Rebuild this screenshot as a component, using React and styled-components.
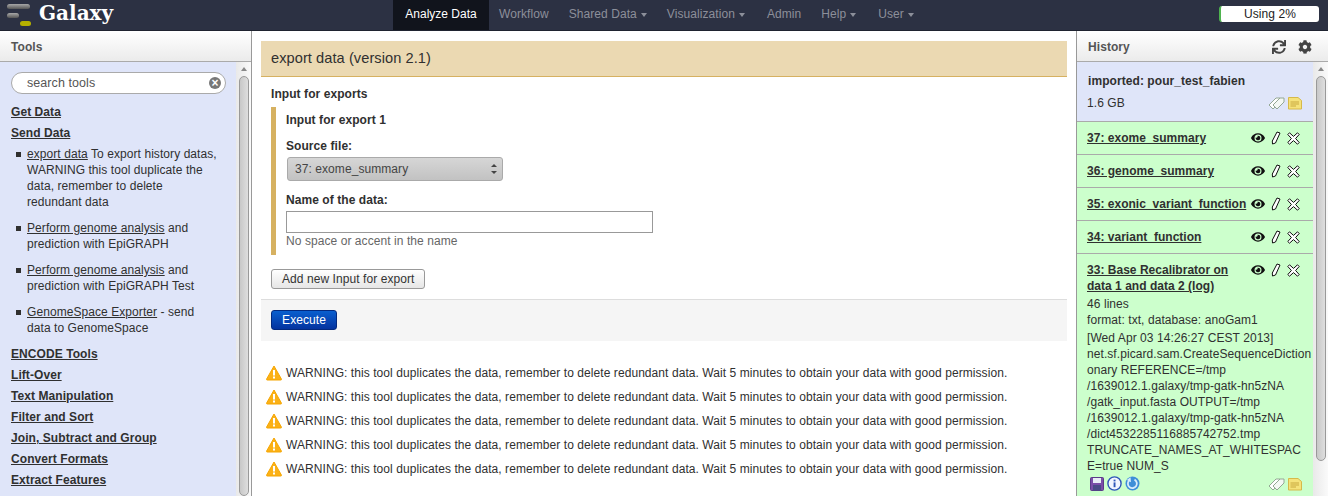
import React from "react";
import styled, { createGlobalStyle } from "styled-components";
import { FaSync, FaCog, FaEye } from "react-icons/fa";

const Global = createGlobalStyle`
  html, body { margin: 0; padding: 0; height: 100%; overflow: hidden; background: #fff; }
  #root { height: 100%; }
  * { box-sizing: border-box; }
  body { font-family: "Liberation Sans", Arial, sans-serif; font-size: 12px; line-height: 16px; letter-spacing: .07px; color: #303030; }
`;

const Page = styled.div`display: flex; flex-direction: column; width: 1328px; height: 496px; overflow: hidden;`;
const Masthead = styled.header`
  height: 31px; flex: none; background: #2c3143; border-bottom: 1px solid #1f2330;
  display: flex; align-items: stretch;
`;
const Brand = styled.div`display: flex; align-items: center; width: 393px; padding-left: 7px; gap: 8px;`;
const BrandName = styled.span`
  font-family: "DejaVu Serif", serif; font-weight: bold; font-size: 20px; letter-spacing: 0; color: #fff; line-height: 26px; margin-top: -4px;
`;
const Nav = styled.nav`display: flex; width: 700px; letter-spacing: .07px;`;
const NavItem = styled.div`
  height: 30px; padding: 0 ${p => (p.$wide ? "12px" : "10px")} 2px 10px; display: flex; align-items: center; gap: 4px;
  font-size: 12px; color: ${p => (p.$active ? "#fff" : "#8c8f9a")}; background: ${p => (p.$active ? "#11141c" : "transparent")};
  ${p => p.$active && "width: 96px; justify-content: center; letter-spacing: 0;"}
`;
const Caret = styled.span`width: 0; height: 0; border-left: 3.5px solid transparent; border-right: 3.5px solid transparent; border-top: 4px solid #8c8f9a; margin-top: 2px;`;
const Quota = styled.div`
  margin: 6px 0 0 126px; width: 100px; height: 16px; background: #fff; border-radius: 3px; border-left: 2px solid #4fb34f;
  font-size: 12px; line-height: 16px; text-align: center; color: #222;
`;

const Body = styled.div`flex: 1; min-height: 0; display: flex;`;
const Side = styled.aside`
  flex: none; width: ${p => p.$w}px; display: flex; flex-direction: column; min-height: 0;
  ${p => (p.$left ? "border-right: 1px solid #999;" : "border-left: 1px solid #999;")}
`;
const SideHead = styled.div`
  height: 31px; flex: none; background: linear-gradient(#fff, #ebebeb); border-bottom: 1px solid #aaa;
  display: flex; align-items: center; justify-content: space-between; padding: 1px 16px 0 11px;
  font-weight: bold; font-size: 12px; color: #555;
`;
const HeadIcons = styled.div`display: flex; gap: 12px; align-items: center; color: #444; font-size: 14px;`;
const SideBody = styled.div`flex: 1; min-height: 0; display: flex;`;
const Scroll = styled.div`
  width: 15px; flex: none; background: linear-gradient(90deg, #e9e9e9, #fafafa); padding: 5px 2px 0 3px;
  display: flex; flex-direction: column; align-items: center; gap: 5px;
`;
const ScrollArrow = styled.span`width: 0; height: 0; border-left: 3.5px solid transparent; border-right: 3.5px solid transparent; border-bottom: 4px solid #888;`;
const ScrollThumb = styled.div`
  width: 10px; height: ${p => p.$h}px; flex: none; background: linear-gradient(90deg, #c8c8c8, #dedede);
  border: 1px solid #999; border-radius: 5px;
`;

const ToolPane = styled.div`flex: 1; min-width: 0; background: #dfe5f9; padding: 10px 0 0 11px; overflow: hidden;`;
const Search = styled.div`
  width: 215px; height: 22px; background: #fff; border: 1px solid #aaa; border-radius: 11px; margin-bottom: 8px;
  display: flex; align-items: center; justify-content: space-between; padding: 0 4px 0 15px; font-size: 12.5px; color: #555;
`;
const Clear = styled.span`
  width: 12px; height: 12px; border-radius: 50%; background: #777; color: #fff; font-size: 12px; line-height: 12px; text-align: center; font-weight: bold;
`;
const Section = styled.div`height: 21px; line-height: 21px; font-weight: bold; font-size: 12px; text-decoration: underline; color: #303030;`;
const ToolList = styled.ul`list-style: none; margin: 2px 0 0; padding: 0 0 0 16px;`;
const Tool = styled.li`
  position: relative; margin-bottom: 10px; width: 192px;
  &:last-child { margin-bottom: 8px; }
  &::before { content: ""; position: absolute; left: -11px; top: 6px; width: 5px; height: 5px; background: #303030; }
`;
const ToolLink = styled.span`text-decoration: underline;`;

const Main = styled.main`flex: 1; min-width: 0; padding: 10px 9px 0 9px; overflow: hidden;`;
const ToolTitle = styled.div`
  height: 36px; background: #ebd9b2; border-bottom: 1px solid #d6b161; padding: 0 10px 2px;
  display: flex; align-items: center; font-size: 14.6px; color: #303030;
`;
const Form = styled.div`padding: 9px 10px 0; height: 222px;`;
const Strong = styled.div`font-weight: bold;`;
const Repeat = styled.div`margin-top: 5px; border-left: 5px solid #d6b161; padding: 5px 0 0 10px; height: 148px;`;
const Label = styled.div`font-weight: bold; margin-top: ${p => p.$mt || 0}px; margin-bottom: ${p => p.$mb || 0}px;`;
const Select = styled.div`
  width: 216px; height: 24px; margin-left: 1px; border: 1px solid #aaa; border-radius: 3px; background: linear-gradient(#d6d6d6, #c2c2c2);
  display: flex; align-items: center; justify-content: space-between; padding: 0 5px 0 7px; color: #444;
`;
const Arrows = styled.span`display: flex; flex-direction: column; gap: 4px;`;
const Up = styled.span`width: 0; height: 0; border-left: 3px solid transparent; border-right: 3px solid transparent; border-bottom: 3px solid #444;`;
const Down = styled.span`width: 0; height: 0; border-left: 3px solid transparent; border-right: 3px solid transparent; border-top: 3px solid #444;`;
const TextInput = styled.div`width: 367px; height: 22px; background: #fff; border: 1px solid #999; margin-top: 3px;`;
const Help = styled.div`color: #666;`;
const Btn = styled.div`
  display: inline-flex; align-items: center; height: 20px; margin-top: 14px; padding: 0 10px; border: 1px solid #999; border-radius: 3px;
  background: linear-gradient(#fff, #e6e6e6); color: #333;
`;
const Footer = styled.div`height: 42px; background: #f5f5f5; border-top: 1px solid #ddd; padding: 10px 10px 0;`;
const Exec = styled.div`
  width: 66px; height: 20px; background: linear-gradient(#0a5fcf, #04339f); border: 1px solid #03297e; border-radius: 3px;
  color: #fff; display: flex; align-items: center; justify-content: center;
`;
const Warnings = styled.div`padding: 24px 5px 0; display: flex; flex-direction: column; gap: 8px;`;
const Warning = styled.div`display: flex; align-items: center; gap: 4px; height: 16px;`;

const HistPane = styled.div`flex: 1; min-width: 0; overflow: hidden; background: #cfc;`;
const HistInfo = styled.div`background: #dfe5f9; height: 60px; border-bottom: 1px solid #aaa; padding: 11px 11px 0 10px;`;
const HistName = styled.div`font-weight: bold; font-size: 12px; margin-left: 1px;`;
const HistMeta = styled.div`display: flex; justify-content: space-between; align-items: center; margin-top: 6px;`;
const PairIcons = styled.div`display: flex; align-items: center; gap: 3px;`;
const Item = styled.div`background: #cfc; padding: 8px 13px 0 10px; border-bottom: 1px solid #aaa; height: 33px; display: flex; justify-content: space-between; align-items: flex-start;`;
const LastItem = styled.div`background: #cfc; padding: 8px 13px 0 10px; display: flex; flex-direction: column;`;
const ItemTop = styled.div`display: flex; justify-content: space-between; align-items: flex-start; margin-bottom: 2px;`;
const ItemName = styled.div`font-weight: bold; text-decoration: underline; letter-spacing: .02px; width: 160px; white-space: ${p => (p.$wrap ? "normal" : "nowrap")};`;
const Actions = styled.div`display: flex; align-items: center; gap: 6px; margin-left: auto; height: 16px;`;
const Info = styled.div`margin-top: 2px;`;
const Line = styled.div`white-space: nowrap;`;
const Foot = styled.div`display: flex; justify-content: space-between; align-items: center; margin: 2px -2px 0 3px;`;
const Group = styled.div`display: flex; align-items: center; gap: 3px;`;

const Logo = () => (
  <svg width="24" height="22" viewBox="0 0 24 22">
    <defs>
      <linearGradient id="bar" x1="0" y1="0" x2="0" y2="1">
        <stop offset="0" stopColor="#a8a8a8" /><stop offset="1" stopColor="#555" />
      </linearGradient>
    </defs>
    <rect x="0" y="0" width="23" height="5" rx="2.5" fill="url(#bar)" />
    <rect x="0" y="9" width="12" height="5" rx="2.5" fill="url(#bar)" />
    <rect x="13" y="17" width="11" height="5" rx="2.5" fill="#b5b000" />
  </svg>
);
const Warn = () => (
  <svg width="16" height="16" viewBox="0 0 16 16">
    <path d="M8 1 L15.5 14.2 Q15.6 15 14.8 15 H1.2 Q.4 15 .5 14.2 Z" fill="#fbb117" stroke="#f5a500" strokeLinejoin="round" />
    <rect x="7" y="5" width="2" height="5.5" fill="#fff" />
    <rect x="7" y="11.5" width="2" height="2" fill="#fff" />
  </svg>
);
const Eye = () => <FaEye size={14} color="#111" />;
const Pencil = () => (
  <svg width="10" height="14" viewBox="0 0 10 14">
    <path d="M6 1 L9 2 L4.5 12 L1.5 13 L1.3 10 Z" fill="#fff" stroke="#111" strokeWidth="1" strokeLinejoin="round" />
  </svg>
);
const Cross = () => (
  <svg width="13" height="13" viewBox="0 0 13 13">
    <path d="M2.5 .8 L6.5 4.4 L10.5 .8 L12.2 2.5 L8.6 6.5 L12.2 10.5 L10.5 12.2 L6.5 8.6 L2.5 12.2 L.8 10.5 L4.4 6.5 L.8 2.5 Z" fill="#fff" stroke="#111" strokeWidth="1" strokeLinejoin="round" />
  </svg>
);
const Tags = () => (
  <svg width="17" height="14" viewBox="0 0 17 14">
    <path d="M1 9 L8 2 H12 L12 6 L5 13 Z" fill="#fff" stroke="#94a894" />
    <path d="M5 9 L12 2 H16 L16 6 L9 13 Z" fill="#f4f8f4" stroke="#94a894" />
  </svg>
);
const Note = () => (
  <svg width="14" height="14" viewBox="0 0 14 14">
    <path d="M.5 1.5 H10 L13.5 4.5 V13 H.5 Z" fill="#f5e27a" stroke="#d6b94a" />
    <path d="M2.5 6 H11 M2.5 8 H11 M2.5 10 H8" stroke="#c9a93e" />
  </svg>
);
const Floppy = () => (
  <svg width="14" height="14" viewBox="0 0 14 14">
    <rect x=".5" y=".5" width="13" height="13" rx="1" fill="#7a4da8" stroke="#5a3a88" />
    <rect x="3" y="1" width="8" height="5" fill="#e8ecf6" />
    <rect x="3" y="8" width="8" height="5.5" fill="#4a4a86" />
  </svg>
);
const InfoIcon = () => (
  <svg width="15" height="15" viewBox="0 0 15 15">
    <circle cx="7.5" cy="7.5" r="6.6" fill="#f2f5ff" stroke="#2f56b8" strokeWidth="1.4" />
    <rect x="6.6" y="6.4" width="1.9" height="4.8" fill="#2f56b8" />
    <rect x="6.6" y="3.6" width="1.9" height="1.8" fill="#2f56b8" />
  </svg>
);
const Rerun = () => (
  <svg width="15" height="15" viewBox="0 0 15 15">
    <circle cx="7.5" cy="7.5" r="7" fill="#3e8fd8" />
    <path d="M9.5 3.6 A4.5 4.5 0 1 1 4 4.6" fill="none" stroke="#d8ecfb" strokeWidth="1.8" />
    <path d="M5.5 1.2 L6 6.2 L1.8 4 Z" fill="#d8ecfb" />
  </svg>
);

const navs = [
  { t: "Analyze Data", a: true },
  { t: "Workflow" },
  { t: "Shared Data", c: true },
  { t: "Visualization", c: true, w: true },
  { t: "Admin" },
  { t: "Help", c: true, w: true },
  { t: "User", c: true },
];
const sections = ["ENCODE Tools", "Lift-Over", "Text Manipulation", "Filter and Sort", "Join, Subtract and Group", "Convert Formats", "Extract Features"];
const items = ["37: exome_summary", "36: genome_summary", "35: exonic_variant_function", "34: variant_function"];
const infoLines = [
  "[Wed Apr 03 14:26:27 CEST 2013]",
  "net.sf.picard.sam.CreateSequenceDiction",
  "onary REFERENCE=/tmp",
  "/1639012.1.galaxy/tmp-gatk-hn5zNA",
  "/gatk_input.fasta OUTPUT=/tmp",
  "/1639012.1.galaxy/tmp-gatk-hn5zNA",
  "/dict4532285116885742752.tmp",
  "TRUNCATE_NAMES_AT_WHITESPAC",
  "E=true NUM_S",
];

export default function App() {
  return (
    <Page>
      <Global />
      <Masthead>
        <Brand><Logo /><BrandName>Galaxy</BrandName></Brand>
        <Nav>
          {navs.map(n => (
            <NavItem key={n.t} $active={n.a} $wide={n.w}>{n.t}{n.c && <Caret />}</NavItem>
          ))}
        </Nav>
        <Quota>Using 2%</Quota>
      </Masthead>
      <Body>
        <Side $w={252} $left>
          <SideHead>Tools</SideHead>
          <SideBody>
            <ToolPane>
              <Search>search tools<Clear>×</Clear></Search>
              <Section>Get Data</Section>
              <Section>Send Data</Section>
              <ToolList>
                <Tool><ToolLink>export data</ToolLink> To export history datas, WARNING this tool duplicate the data, remember to delete redundant data</Tool>
                <Tool><ToolLink>Perform genome analysis</ToolLink> and prediction with EpiGRAPH</Tool>
                <Tool><ToolLink>Perform genome analysis</ToolLink> and prediction with EpiGRAPH Test</Tool>
                <Tool><ToolLink>GenomeSpace Exporter</ToolLink> - send data to GenomeSpace</Tool>
              </ToolList>
              {sections.map(s => <Section key={s}>{s}</Section>)}
            </ToolPane>
            <Scroll><ScrollArrow /><ScrollThumb $h={420} /></Scroll>
          </SideBody>
        </Side>
        <Main>
          <ToolTitle>export data (version 2.1)</ToolTitle>
          <Form>
            <Strong>Input for exports</Strong>
            <Repeat>
              <Label $mb={10}>Input for export 1</Label>
              <Label $mb={3}>Source file:</Label>
              <Select>37: exome_summary<Arrows><Up /><Down /></Arrows></Select>
              <Label $mt={11}>Name of the data:</Label>
              <TextInput />
              <Help>No space or accent in the name</Help>
            </Repeat>
            <Btn>Add new Input for export</Btn>
          </Form>
          <Footer><Exec>Execute</Exec></Footer>
          <Warnings>
            {[0, 1, 2, 3, 4].map(i => (
              <Warning key={i}><Warn />WARNING: this tool duplicates the data, remember to delete redundant data. Wait 5 minutes to obtain your data with good permission.</Warning>
            ))}
          </Warnings>
        </Main>
        <Side $w={252}>
          <SideHead>History<HeadIcons><FaSync /><FaCog /></HeadIcons></SideHead>
          <SideBody>
            <HistPane>
              <HistInfo>
                <HistName>imported: pour_test_fabien</HistName>
                <HistMeta>1.6 GB<PairIcons><Tags /><Note /></PairIcons></HistMeta>
              </HistInfo>
              {items.map(n => (
                <Item key={n}>
                  <ItemName>{n}</ItemName>
                  <Actions><Eye /><Pencil /><Cross /></Actions>
                </Item>
              ))}
              <LastItem>
                <ItemTop>
                  <ItemName $wrap>33: Base Recalibrator on data 1 and data 2 (log)</ItemName>
                  <Actions><Eye /><Pencil /><Cross /></Actions>
                </ItemTop>
                <Line>46 lines</Line>
                <Line>format: txt, database: anoGam1</Line>
                <Info>{infoLines.map((l, i) => <Line key={i}>{l}</Line>)}</Info>
                <Foot>
                  <Group><Floppy /><InfoIcon /><Rerun /></Group>
                  <PairIcons><Tags /><Note /></PairIcons>
                </Foot>
              </LastItem>
            </HistPane>
            <Scroll><ScrollArrow /><ScrollThumb $h={385} /></Scroll>
          </SideBody>
        </Side>
      </Body>
    </Page>
  );
}
